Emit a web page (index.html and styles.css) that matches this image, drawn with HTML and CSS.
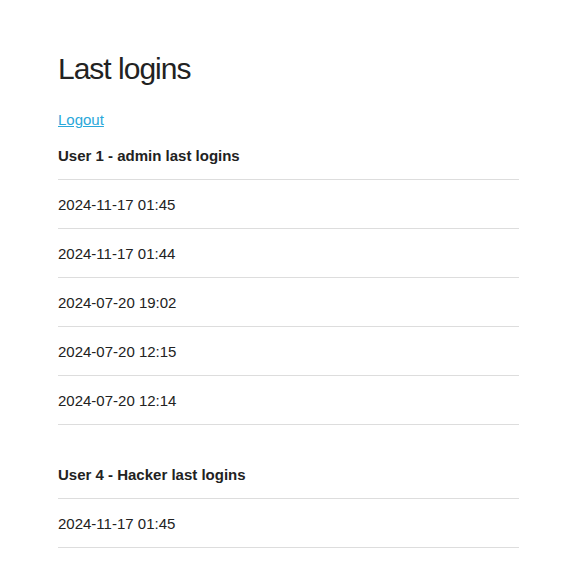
FILE: index.html
```html
<!DOCTYPE html>
<html lang="en">
<head>
<meta charset="utf-8">
<title>Last logins</title>
<link rel="stylesheet" href="styles.css">
</head>
<body>
<main class="page">
  <h1 class="title">Last logins</h1>
  <p class="actions"><a href="#" class="link">Logout</a></p>
  <section class="user">
    <h2 class="user-head">User 1 - admin last logins</h2>
    <ul class="logins">
      <li class="login">2024-11-17 01:45</li>
      <li class="login">2024-11-17 01:44</li>
      <li class="login">2024-07-20 19:02</li>
      <li class="login">2024-07-20 12:15</li>
      <li class="login">2024-07-20 12:14</li>
    </ul>
  </section>
  <section class="user">
    <h2 class="user-head">User 4 - Hacker last logins</h2>
    <ul class="logins">
      <li class="login">2024-11-17 01:45</li>
    </ul>
  </section>
</main>
</body>
</html>
```
FILE: styles.css
```css
html, body {
  margin: 0;
  padding: 0;
  background: #fff;
}
body {
  font-family: "Liberation Sans", Arial, sans-serif;
  font-size: 15px;
  line-height: 18px;
  color: #222;
}
.page {
  width: 461px;
  margin-left: 58px;
  padding-top: 50px;
}
.title {
  margin: 0;
  font-size: 30px;
  line-height: 38px;
  font-weight: 400;
  letter-spacing: -1px;
  color: #222;
}
.actions {
  margin: 23px 0 0;
}
.link {
  color: #2aa8da;
  text-decoration: underline;
}
.user {
  margin-top: 26px;
}
.user:first-of-type {
  margin-top: 3px;
}
.user-head {
  margin: 0;
  padding: 15px 0 14px;
  font-size: 15px;
  line-height: 18px;
  font-weight: 700;
  border-bottom: 1px solid #ddd;
}
.logins {
  list-style: none;
  margin: 0;
  padding: 0;
}
.login {
  padding: 16px 0 14px;
  border-bottom: 1px solid #ddd;
}
```
